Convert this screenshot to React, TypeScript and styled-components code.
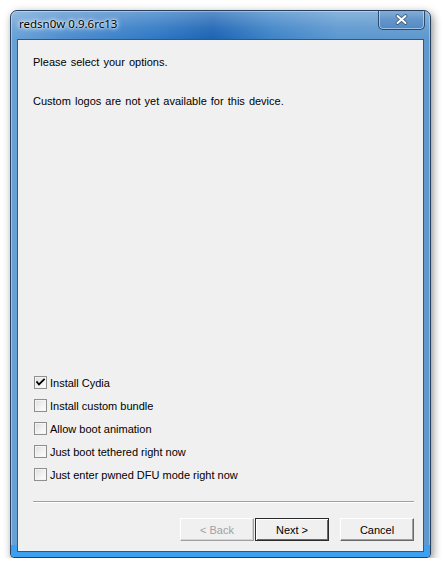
import { FC } from "react";
import styled, { createGlobalStyle } from "styled-components";

const GlobalStyle = createGlobalStyle`
html, body {
    margin: 0;
    padding: 0;
    background: #ffffff;
}
body {
    font-family: "Liberation Sans", Arial, sans-serif;
}
`;

const options = [
    { label: "Install Cydia", checked: true },
    { label: "Install custom bundle", checked: false },
    { label: "Allow boot animation", checked: false },
    { label: "Just boot tethered right now", checked: false },
    { label: "Just enter pwned DFU mode right now", checked: false },
];

// ウィンドウ全体
const Window = styled.div`
width: 421px;
height: 548px;
margin: 10px 0 0 10px;
box-sizing: border-box;
display: flex;
flex-direction: column;
border: 1px solid #27405e;
border-radius: 7px 7px 4px 4px;
background: linear-gradient(90deg,
    #6aa2d6 0%,
    #4f8fcf 12%,
    #2f78c4 35%,
    #1c63b3 48%,
    #3d83c7 62%,
    #5b97cf 78%,
    #5e98cd 100%);
box-shadow: 2px 3px 8px rgba(0, 0, 0, 0.45), inset 0 0 0 1px rgba(255, 255, 255, 0.35);
overflow: hidden;
position: relative;

&::after {
    content: "";
    position: absolute;
    left: 0;
    right: 0;
    bottom: 0;
    height: 12px;
    background: #3c9ff0;
    z-index: 0;
    border-radius: 0 0 4px 4px;
}
`;

const TitleBar = styled.div`
height: 28px;
display: flex;
align-items: flex-start;
justify-content: space-between;
padding-left: 8px;
background: linear-gradient(180deg, rgba(255,255,255,0.28) 0%, rgba(255,255,255,0.08) 60%, rgba(255,255,255,0) 100%);
`;

const Title = styled.span`
font-family: "Noto Sans", "Open Sans", sans-serif;
font-size: 11.5px;
line-height: 28px;
margin-top: -1px;
color: #000;
text-shadow: 0 0 6px #fff, 0 0 4px #fff, 0 0 2px #fff;
`;

const CloseButton = styled.div`
width: 47px;
height: 20px;
margin-right: 5px;
margin-top: -1px;
box-sizing: border-box;
border: 1px solid #2c4a6e;
border-top: none;
border-radius: 0 0 5px 5px;
background: linear-gradient(180deg, #86b0db 0%, #6496cb 50%, #5289c4 100%);
box-shadow: inset 0 0 0 1px rgba(255, 255, 255, 0.45);
display: flex;
align-items: center;
justify-content: center;
`;

const Client = styled.div`
flex: 1;
margin: 0 6px 5px 6px;
background: #f0f0f0;
border: 1px solid #3b5573;
display: flex;
flex-direction: column;
padding: 14px 9px 10px 15px;
font-family: "Liberation Sans", Arial, sans-serif;
font-size: 11px;
color: #000;
position: relative;
z-index: 1;
`;

const Text = styled.p<{ $gap?: number }>`
margin: 0 0 ${(p) => p.$gap ?? 0}px 0;
line-height: 16px;
word-spacing: 1px;
`;

const Spacer = styled.div`
flex: 1;
`;

const OptionList = styled.div`
display: flex;
flex-direction: column;
gap: 10px;
padding-left: 1px;
margin-bottom: 20px;
`;

const OptionRow = styled.label`
display: flex;
align-items: center;
gap: 3px;
height: 13px;
`;

const Box = styled.span`
width: 13px;
height: 13px;
box-sizing: border-box;
border: 1px solid #8e8f8f;
background: linear-gradient(135deg, #dcdcdc 0%, #f0f0f0 50%, #ffffff 100%);
box-shadow: inset 0 0 0 1px #f4f4f4;
display: flex;
align-items: center;
justify-content: center;
`;

const Separator = styled.div`
height: 0;
border-top: 1px solid #a0a0a0;
border-bottom: 1px solid #ffffff;
margin-bottom: 15px;
`;

const ButtonRow = styled.div`
display: flex;
justify-content: flex-end;
`;

const Button = styled.div<{ $disabled?: boolean; $default?: boolean; $gap?: number }>`
width: 74px;
height: 23px;
box-sizing: border-box;
margin-left: ${(p) => p.$gap ?? 0}px;
display: flex;
align-items: center;
justify-content: center;
background: #f0f0f0;
color: ${(p) => (p.$disabled ? "#a0a0a0" : "#000")};
border: 1px solid;
border-color: ${(p) =>
        p.$default ? "#2b2b2b" : p.$disabled ? "#ffffff #a0a0a0 #a0a0a0 #ffffff" : "#ffffff #696969 #696969 #ffffff"};
box-shadow: ${(p) =>
        p.$default
            ? "inset 1px 1px 0 #ffffff, inset -1px -1px 0 #696969"
            : p.$disabled
                ? "inset -1px -1px 0 #d4d4d4"
                : "inset -1px -1px 0 #a0a0a0"};
`;

const CheckMark: FC = () => (
    <svg width="9" height="9" viewBox="0 0 9 9">
        <path d="M1 4 L3 6.5 L8 1.5" stroke="#000" strokeWidth="1.8" fill="none" strokeLinecap="square" />
    </svg>
);

const CloseIcon: FC = () => (
    <svg width="13" height="11" viewBox="0 0 13 11">
        <path d="M2.5 2 L10.5 9 M10.5 2 L2.5 9" stroke="#3a5474" strokeWidth="3.6" strokeLinecap="round" />
        <path d="M2.5 2 L10.5 9 M10.5 2 L2.5 9" stroke="#ffffff" strokeWidth="2" strokeLinecap="round" />
    </svg>
);

export default function App() {
    return (
        <>
            <GlobalStyle />
            <Window>
                <TitleBar>
                    <Title>redsn0w 0.9.6rc13</Title>
                    <CloseButton>
                        <CloseIcon />
                    </CloseButton>
                </TitleBar>
                <Client>
                    <Text $gap={23}>Please select your options.</Text>
                    <Text>Custom logos are not yet available for this device.</Text>
                    <Spacer />
                    <OptionList>
                        {options.map((opt, i) => (
                            <OptionRow key={i}>
                                <Box>{opt.checked && <CheckMark />}</Box>
                                <span>{opt.label}</span>
                            </OptionRow>
                        ))}
                    </OptionList>
                    <Separator />
                    <ButtonRow>
                        <Button $disabled>&lt; Back</Button>
                        <Button $default $gap={1}>Next &gt;</Button>
                        <Button $gap={11}>Cancel</Button>
                    </ButtonRow>
                </Client>
            </Window>
        </>
    );
}
